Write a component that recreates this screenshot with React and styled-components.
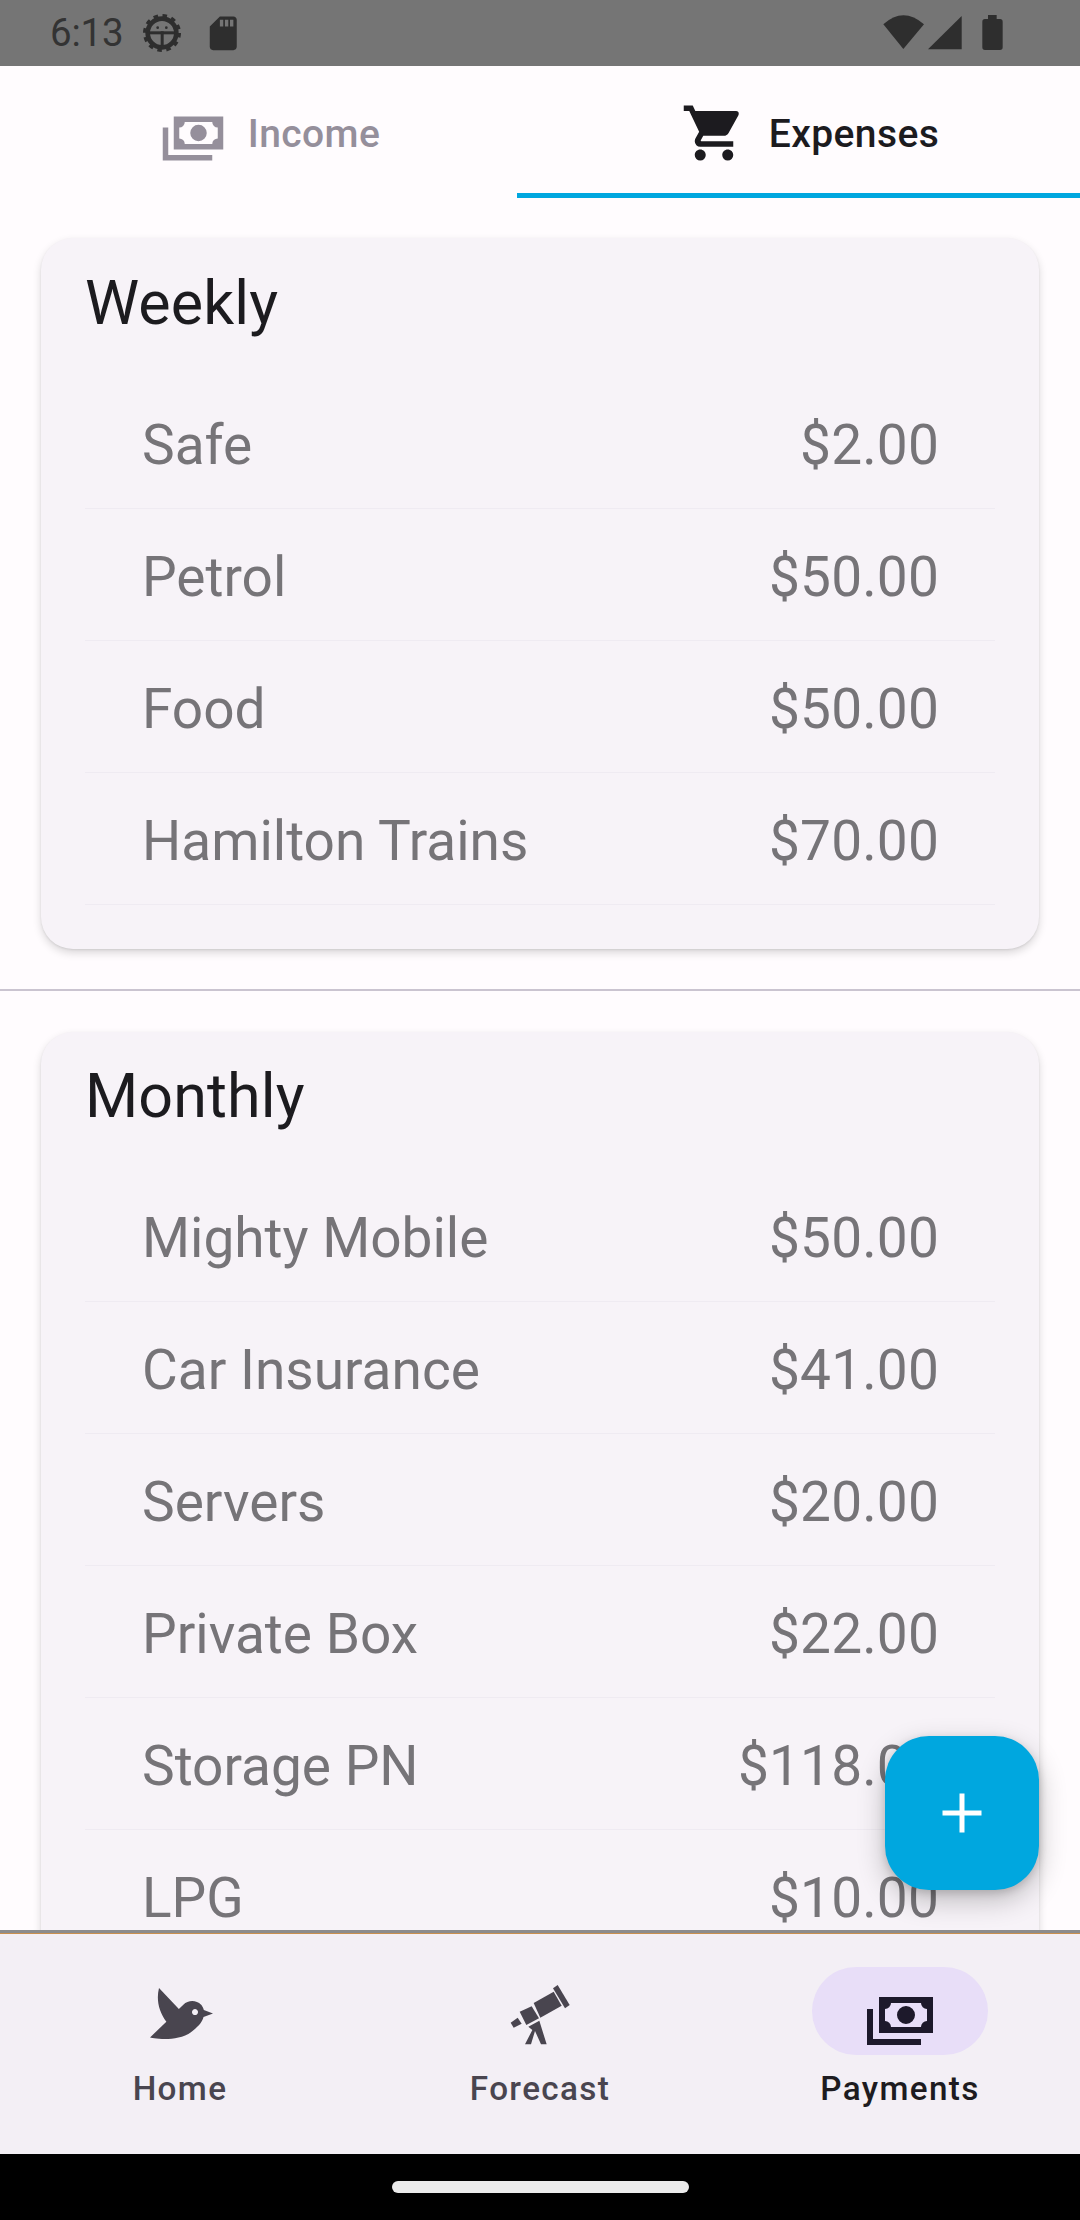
import React from "react";
import styled, { createGlobalStyle } from "styled-components";

const Global = createGlobalStyle`
  html, body { margin: 0; padding: 0; background: #000; }
  * { box-sizing: border-box; }
  body { font-family: Roboto, "Noto Sans", sans-serif; }
`;

const Phone = styled.div`
  width: 1080px;
  height: 2220px;
  display: flex;
  flex-direction: column;
  background: #fffcfe;
  overflow: hidden;
`;

const StatusBar = styled.div`
  height: 66px;
  flex: none;
  display: flex;
  align-items: flex-start;
  background: #757575;
  color: #333;
  padding: 0 60px 0 50px;
`;
const Clock = styled.span`
  font-size: 38.5px;
  line-height: 66px;
  width: 86.5px;
  letter-spacing: -0.2px;
`;
const GearIcon = styled.svg`
  width: 50px;
  height: 50px;
  margin-top: 8px;
`;
const SdIcon = styled.svg`
  width: 40.5px;
  height: 40.5px;
  margin: 12.5px 0 0 16px;
  fill: #2e2e2e;
`;
const StatusRight = styled.svg`
  width: 150px;
  height: 55px;
  margin: 5px 0 0 auto;
  fill: #2e2e2e;
`;

const Tabs = styled.div`
  height: 132px;
  flex: none;
  position: relative;
  display: grid;
  grid-template-columns: 1fr 1fr;
`;
const Tab = styled.div`
  display: flex;
  align-items: center;
  justify-content: center;
  gap: 22px;
  padding-top: 4px;
  font-size: 39px;
  font-weight: 460;
  letter-spacing: 0.4px;
  color: ${(p) => (p.$active ? "#1c1b1f" : "#958f9b")};
`;
const TabIcon = styled.svg`
  width: 66px;
  height: 66px;
  margin-bottom: 2px;
  fill: currentColor;
  flex: none;
`;
const TabIndicator = styled.div`
  position: absolute;
  left: 517px;
  right: 0;
  bottom: 0;
  height: 5px;
  background: #00a7df;
`;

const Main = styled.div`
  flex: 1;
  min-height: 0;
  position: relative;
`;
const Scroll = styled.div`
  height: 100%;
  overflow: hidden;
  padding-top: 40px;
`;
const Card = styled.section`
  margin: 0 41px;
  height: ${(p) => p.$height}px;
  background: #f7f3f8;
  border-radius: 32px;
  box-shadow: 0 4px 8px rgba(0, 0, 0, 0.15), 0 1px 2px rgba(0, 0, 0, 0.08);
  padding: 0 44px;
`;
const CardTitle = styled.h2`
  margin: 0;
  height: 138.5px;
  padding-top: 30.5px;
  font-size: 61px;
  line-height: 68px;
  font-weight: 400;
  letter-spacing: 0.1px;
  color: #1c1b1f;
`;
const Row = styled.div`
  height: 132px;
  display: flex;
  align-items: center;
  justify-content: space-between;
  padding: 5px 56px 0 57px;
  border-bottom: 1.5px solid #efebf2;
  font-size: 55px;
  color: #767478;
`;
const Amount = styled.span`
  letter-spacing: 0.15px;
`;
const SectionRule = styled.hr`
  margin: 40px 0 41px;
  border: 0;
  height: 1.5px;
  background: #cac4d0;
`;
const Fab = styled.button`
  position: absolute;
  right: 41px;
  bottom: 40px;
  width: 154px;
  height: 154px;
  border: 0;
  padding: 0;
  border-radius: 44px;
  background: #00a7df;
  display: flex;
  align-items: center;
  justify-content: center;
  box-shadow: 0 10px 28px rgba(0, 0, 0, 0.24), 0 3px 8px rgba(0, 0, 0, 0.14);
`;

const NavRule = styled.div`
  height: 4px;
  flex: none;
  background: #8c8c8c;
  border-bottom: 1px solid #c98f4f;
`;
const Nav = styled.nav`
  height: 220px;
  flex: none;
  display: grid;
  grid-template-columns: repeat(3, 1fr);
  background: #f3eff5;
  padding-top: 33px;
`;
const NavItem = styled.div`
  display: flex;
  flex-direction: column;
  align-items: center;
  font-size: 33.25px;
  font-weight: 460;
  line-height: 40px;
  letter-spacing: 1.35px;
  color: ${(p) => (p.$active ? "#1d1b20" : "#49454f")};
`;
const NavPill = styled.div`
  width: 176px;
  height: 88px;
  border-radius: 44px;
  display: flex;
  align-items: center;
  justify-content: center;
  padding-top: 8px;
  margin-bottom: 14px;
  background: ${(p) => (p.$active ? "#e8def8" : "transparent")};
  color: ${(p) => (p.$active ? "#1d192b" : "#49454f")};
`;
const NavIcon = styled.svg`
  flex: none;
  fill: currentColor;
`;

const GestureBar = styled.div`
  height: 66px;
  flex: none;
  background: #000;
  display: flex;
  justify-content: center;
  padding-top: 27px;
`;
const Handle = styled.div`
  width: 297px;
  height: 12px;
  border-radius: 6px;
  background: #ebebeb;
`;

const CASH =
  "M5,6H23V18H5V6M14,9A3,3 0 0,1 17,12A3,3 0 0,1 14,15A3,3 0 0,1 11,12A3,3 0 0,1 14,9M9,8A2,2 0 0,1 7,10V14A2,2 0 0,1 9,16H19A2,2 0 0,1 21,14V10A2,2 0 0,1 19,8H9M1,10H3V20H19V22H1V10Z";
const CART =
  "M17,18C15.89,18 15,18.89 15,20A2,2 0 0,0 17,22A2,2 0 0,0 19,20C19,18.89 18.1,18 17,18M1,2V4H3L6.6,11.59L5.24,14.04C5.09,14.32 5,14.65 5,15A2,2 0 0,0 7,17H19V15H7.42A0.25,0.25 0 0,1 7.17,14.75C7.17,14.7 7.18,14.66 7.2,14.63L8.1,13H15.55C16.3,13 16.96,12.58 17.3,11.97L20.88,5.5C20.95,5.34 21,5.17 21,5A1,1 0 0,0 20,4H5.21L4.27,2M7,18C5.89,18 5,18.89 5,20A2,2 0 0,0 7,22A2,2 0 0,0 9,20C9,18.89 8.1,18 7,18Z";
const BIRD =
  "M23 11.5L19.95 10.37C19.69 9.22 19.04 8.56 19.04 8.56C17.4 6.92 14.75 6.92 13.11 8.56L11.63 10.04L5 3C4 7 5 11 7.45 14.22L2 19.5C2 19.5 10.89 21.5 16.07 17.45C18.83 15.29 19.45 14.03 19.84 12.7L23 11.5M17.71 11.72C17.32 12.11 16.68 12.11 16.29 11.72C15.9 11.33 15.9 10.7 16.29 10.31C16.68 9.92 17.32 9.92 17.71 10.31C18.1 10.7 18.1 11.33 17.71 11.72Z";

const weekly = [
  ["Safe", "$2.00"],
  ["Petrol", "$50.00"],
  ["Food", "$50.00"],
  ["Hamilton Trains", "$70.00"],
];
const monthly = [
  ["Mighty Mobile", "$50.00"],
  ["Car Insurance", "$41.00"],
  ["Servers", "$20.00"],
  ["Private Box", "$22.00"],
  ["Storage PN", "$118.00"],
  ["LPG", "$10.00"],
];

const Rows = ({ items }) =>
  items.map(([name, amount]) => (
    <Row key={name}>
      <span>{name}</span>
      <Amount>{amount}</Amount>
    </Row>
  ));

export default function App() {
  return (
    <Phone>
      <Global />
      <StatusBar>
        <Clock>6:13</Clock>
        <GearIcon viewBox="0 0 150 150">
          <circle cx="75" cy="75" r="43" fill="none" stroke="#2e2e2e" strokeWidth="14" />
          <circle cx="75" cy="75" r="50" fill="none" stroke="#2e2e2e" strokeWidth="14" strokeDasharray="13 13.18" />
          <rect x="38" y="70" width="74" height="9" fill="#2e2e2e" />
          <rect x="71" y="70" width="9" height="42" fill="#2e2e2e" />
          <circle cx="62" cy="59" r="4" fill="#2e2e2e" />
          <circle cx="88" cy="59" r="4" fill="#2e2e2e" />
        </GearIcon>
        <SdIcon viewBox="0 0 24 24">
          <path d="M18 2h-8L4.02 8 4 20c0 1.1.9 2 2 2h12c1.1 0 2-.9 2-2V4c0-1.1-.9-2-2-2zm-6 6h-2V4h2v4zm3 0h-2V4h2v4zm3 0h-2V4h2v4z" />
        </SdIcon>
        <StatusRight viewBox="0 0 450 165">
          <path d="M100 132L40 58Q100 4 162 58Z" />
          <path d="M174 133L275 33V133Z" />
          <path d="M354 30H380V42H390Q398 42 398 50V127Q398 135 390 135H345Q337 135 337 127V50Q337 42 345 42H354Z" />
        </StatusRight>
      </StatusBar>

      <Tabs>
        <Tab>
          <TabIcon viewBox="0 0 24 24"><path d={CASH} /></TabIcon>
          Income
        </Tab>
        <Tab $active>
          <TabIcon viewBox="0 0 24 24"><path d={CART} /></TabIcon>
          Expenses
        </Tab>
        <TabIndicator />
      </Tabs>

      <Main>
        <Scroll>
          <Card $height={711}>
            <CardTitle>Weekly</CardTitle>
            <Rows items={weekly} />
          </Card>
          <SectionRule />
          <Card $height={1000}>
            <CardTitle>Monthly</CardTitle>
            <Rows items={monthly} />
          </Card>
        </Scroll>
        <Fab aria-label="Add">
          <svg width="40" height="40" viewBox="0 0 40 40" fill="#fff">
            <rect x="17.5" y="0.5" width="5" height="39" />
            <rect x="0.5" y="17.5" width="39" height="5" />
          </svg>
        </Fab>
      </Main>

      <NavRule />
      <Nav>
        <NavItem>
          <NavPill>
            <NavIcon width="72" height="72" viewBox="0 0 24 24"><path d={BIRD} /></NavIcon>
          </NavPill>
          Home
        </NavItem>
        <NavItem>
          <NavPill>
            <NavIcon width="90" height="80" viewBox="0 0 270 240">
              <path d="M174 40L188 30L224 90L210 100Z" />
              <path d="M116 84L176 50L200 92L136 128Z" />
              <path d="M74 110L110 94L132 130L94 150Z" />
              <path d="M47 143L68 128L80 146L56 158Z" />
              <path d="M100 155L133 137L140 160L155 208H138L120 168L108 208H90L112 165Z" />
            </NavIcon>
          </NavPill>
          Forecast
        </NavItem>
        <NavItem $active>
          <NavPill $active>
            <NavIcon width="72" height="72" viewBox="0 0 24 24"><path d={CASH} /></NavIcon>
          </NavPill>
          Payments
        </NavItem>
      </Nav>
      <GestureBar>
        <Handle />
      </GestureBar>
    </Phone>
  );
}
